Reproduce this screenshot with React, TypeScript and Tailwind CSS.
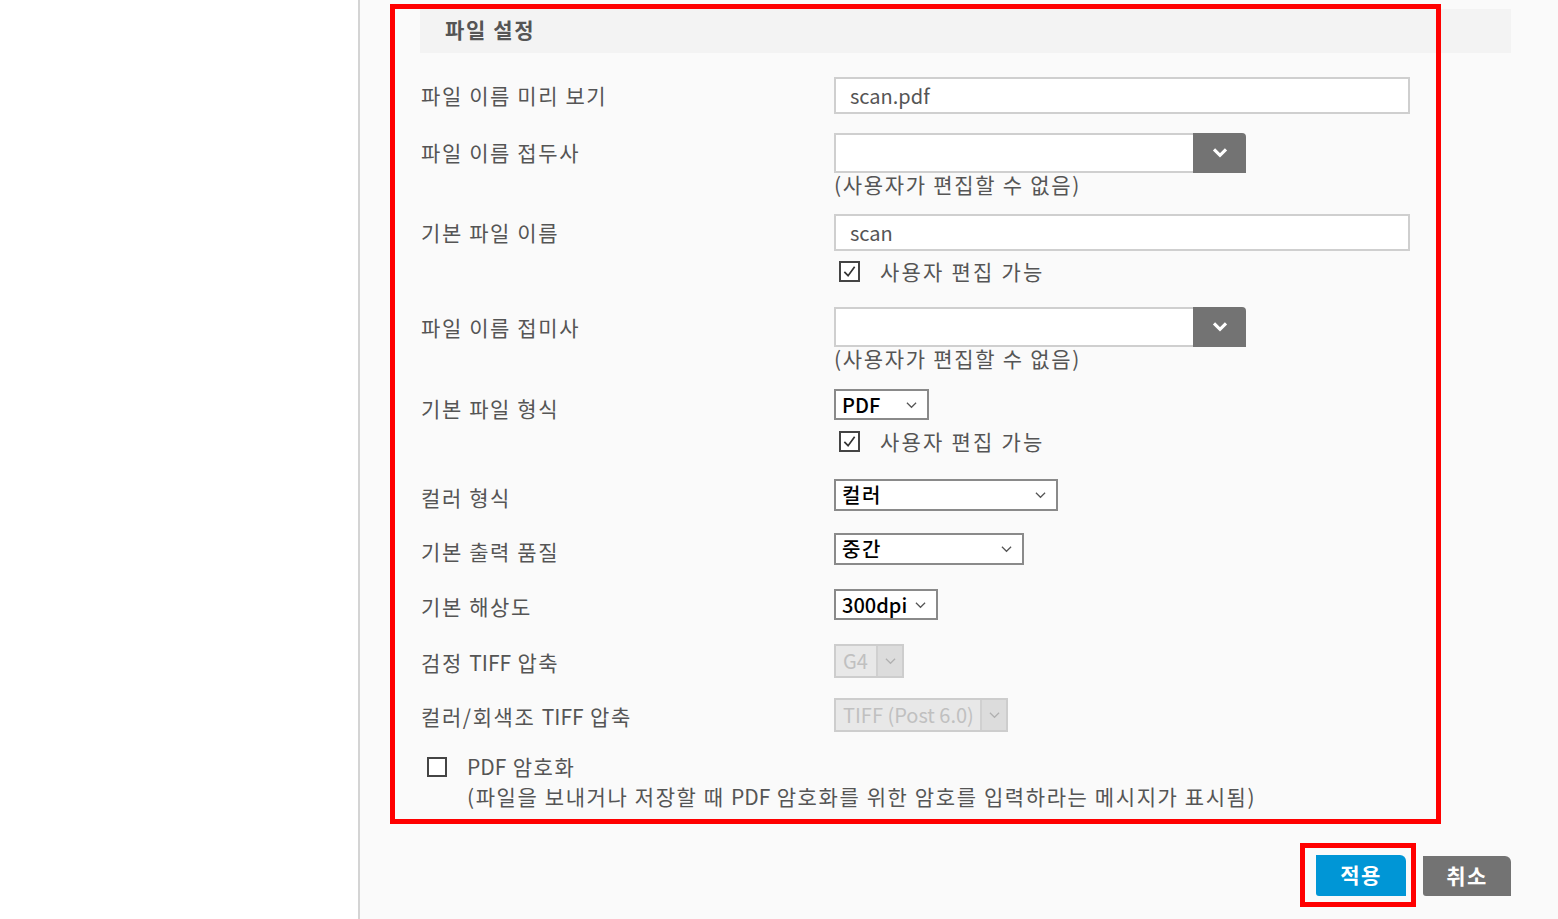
import React from 'react';

const font = "font-['Noto_Sans_CJK_KR','Noto_Sans',sans-serif]";

// korean glyphs in the original are wider than Noto's, latin words are not
function Ko({ text }: { text: string }) {
  const parts = text.split(/(PDF|TIFF)/);
  return (
    <>
      {parts.map((p, i) =>
        p === 'PDF' || p === 'TIFF' ? (
          <span key={i} className="tracking-normal">{p}</span>
        ) : (
          <span key={i}>{p}</span>
        )
      )}
    </>
  );
}

function Chevron({ className = '' }: { className?: string }) {
  return (
    <svg viewBox="0 0 12 8" className={className} fill="none">
      <polyline points="1,1.5 6,6.5 11,1.5" stroke="currentColor" strokeWidth="1.3" />
    </svg>
  );
}

function Check({ checked }: { checked?: boolean }) {
  return (
    <div className="w-[21px] h-[21px] border-2 border-[#444] bg-white flex items-center justify-center">
      {checked && (
        <svg viewBox="0 0 16 16" className="w-[15px] h-[15px]" fill="none">
          <polyline points="2.5,8.5 6.5,12.5 13.5,3" stroke="#333" strokeWidth="1.8" />
        </svg>
      )}
    </div>
  );
}

function Label({ text, h, pt = 'pt-[4px]' }: { text: string; h: string; pt?: string }) {
  return (
    <div className={`w-[414px] shrink-0 pl-[1px] flex items-center ${h} ${pt}`}>
      <span className="text-[21px] leading-none text-[#555] tracking-[1.6px]">
        <Ko text={text} />
      </span>
    </div>
  );
}

function ComboBox() {
  return (
    <div className="flex w-[412px] h-[40px]">
      <div className="flex-1 border-2 border-r-0 border-[#cfcfcf] bg-white" />
      <div className="w-[53px] bg-[#737373] rounded-tr-[4px] flex items-center justify-center">
        <svg viewBox="0 0 14 10" className="w-[18px] h-[12px]" fill="none">
          <polyline points="2,2 7,7 12,2" stroke="white" strokeWidth="2.6" />
        </svg>
      </div>
    </div>
  );
}

function Select({ value, w, h, ko }: { value: string; w: string; h: string; ko?: boolean }) {
  return (
    <div className={`${w} ${h} border-2 border-[#8a8a8a] bg-white flex items-center pl-[6px] pr-[10px]`}>
      <span className={`flex-1 text-[20px] leading-none text-black font-medium ${ko ? 'tracking-[1.5px]' : ''}`}>
        {value}
      </span>
      <Chevron className="w-[11px] h-[8px] text-[#555]" />
    </div>
  );
}

function DisabledSelect({ value, w }: { value: string; w: string }) {
  return (
    <div className={`${w} h-[34px] border-2 border-[#cdcdcd] bg-[#e8e8e8] flex`}>
      <span className="flex-1 flex items-center pl-[7px] text-[20px] leading-none text-[#c0c0c0] whitespace-nowrap">
        {value}
      </span>
      <div className="w-[26px] border-l-2 border-[#d0d0d0] bg-[#dcdcdc] flex items-center justify-center">
        <Chevron className="w-[11px] h-[8px] text-[#b0b0b0]" />
      </div>
    </div>
  );
}

function Note() {
  return (
    <div className="text-[21px] leading-[22px] text-[#555] tracking-[1.7px] whitespace-nowrap">
      (사용자가 편집할 수 없음)
    </div>
  );
}

function Editable({ mt }: { mt: string }) {
  return (
    <div className={`flex items-center ${mt} h-[21px] pl-[5px]`}>
      <Check checked />
      <span className="ml-[20px] text-[21px] leading-none text-[#555] tracking-[2.2px] whitespace-nowrap">
        사용자 편집 가능
      </span>
    </div>
  );
}

export default function App() {
  return (
    <div className={`relative w-[1558px] h-[919px] flex bg-white overflow-hidden ${font}`}>
      <div className="w-[358px] shrink-0 bg-white" />
      <div className="w-[2px] shrink-0 bg-[#d4d4d4]" />
      <div className="flex-1 bg-[#fafafa] pl-[60px] pr-[47px]">
        <div className="mt-[9px] h-[44px] bg-[#f3f3f3] flex items-center pl-[25px] pb-[3px]">
          <span className="text-[21px] font-bold text-[#555] leading-none tracking-[1.6px]">파일 설정</span>
        </div>

        <div className="flex mt-[24px]">
          <Label text="파일 이름 미리 보기" h="h-[37px]" pt="pt-0" />
          <div className="w-[576px] h-[37px] border-2 border-[#cfcfcf] bg-white flex items-center pl-[14px] text-[20px] text-[#555]">
            scan.pdf
          </div>
        </div>

        <div className="flex mt-[19px]">
          <Label text="파일 이름 접두사" h="h-[39px]" pt="pt-0" />
          <div className="flex flex-col">
            <ComboBox />
            <Note />
          </div>
        </div>

        <div className="flex mt-[19px]">
          <Label text="기본 파일 이름" h="h-[37px]" pt="pt-0" />
          <div className="flex flex-col">
            <div className="w-[576px] h-[37px] border-2 border-[#cfcfcf] bg-white flex items-center pl-[14px] text-[20px] text-[#555]">
              scan
            </div>
            <Editable mt="mt-[10px]" />
          </div>
        </div>

        <div className="flex mt-[25px]">
          <Label text="파일 이름 접미사" h="h-[40px]" pt="pt-0" />
          <div className="flex flex-col">
            <ComboBox />
            <Note />
          </div>
        </div>

        <div className="flex mt-[20px]">
          <Label text="기본 파일 형식" h="h-[30px]" pt="pt-[8px]" />
          <div className="flex flex-col">
            <Select value="PDF" w="w-[95px]" h="h-[31px]" />
            <Editable mt="mt-[11px]" />
          </div>
        </div>

        <div className="flex mt-[27px]">
          <Label text="컬러 형식" h="h-[32px]" pt="pt-[4px]" />
          <Select value="컬러" w="w-[224px]" h="h-[32px]" ko />
        </div>

        <div className="flex mt-[22px]">
          <Label text="기본 출력 품질" h="h-[32px]" pt="pt-[4px]" />
          <Select value="중간" w="w-[190px]" h="h-[32px]" ko />
        </div>

        <div className="flex mt-[24px]">
          <Label text="기본 해상도" h="h-[31px]" pt="pt-[4px]" />
          <Select value="300dpi" w="w-[104px]" h="h-[31px]" />
        </div>

        <div className="flex mt-[24px]">
          <Label text="검정 TIFF 압축" h="h-[34px]" pt="pt-[2px]" />
          <DisabledSelect value="G4" w="w-[70px]" />
        </div>

        <div className="flex mt-[20px]">
          <Label text="컬러/회색조 TIFF 압축" h="h-[34px]" pt="pt-[2px]" />
          <DisabledSelect value="TIFF (Post 6.0)" w="w-[174px]" />
        </div>

        <div className="flex mt-[19px] pl-[7px]">
          <div className="pt-[6px]">
            <div className="w-[20px] h-[20px] border-2 border-[#444] bg-white" />
          </div>
          <div className="ml-[20px] text-[21px] leading-[30px] text-[#555] tracking-[1.6px] whitespace-nowrap">
            <div>
              <Ko text="PDF 암호화" />
            </div>
            <div>
              <Ko text="(파일을 보내거나 저장할 때 PDF 암호화를 위한 암호를 입력하라는 메시지가 표시됨)" />
            </div>
          </div>
        </div>

        <div className="flex justify-end gap-[17px] mt-[44px]">
          <button className="w-[90px] h-[41px] bg-[#0096d6] rounded-tr-[6px] rounded-bl-[3px] text-white font-bold text-[21px] leading-none tracking-[1.5px] pb-[2px]">
            적용
          </button>
          <button className="w-[88px] h-[40px] mt-[1px] bg-[#737373] rounded-tr-[6px] rounded-bl-[3px] text-white font-bold text-[21px] leading-none tracking-[1.5px] pb-[2px]">
            취소
          </button>
        </div>
      </div>

      <div className="absolute left-[390px] top-[4px] w-[1051px] h-[820px] border-[5px] border-[#ff0000] pointer-events-none" />
      <div className="absolute left-[1300px] top-[843px] w-[116px] h-[64px] border-[5px] border-[#ff0000] pointer-events-none" />
    </div>
  );
}
